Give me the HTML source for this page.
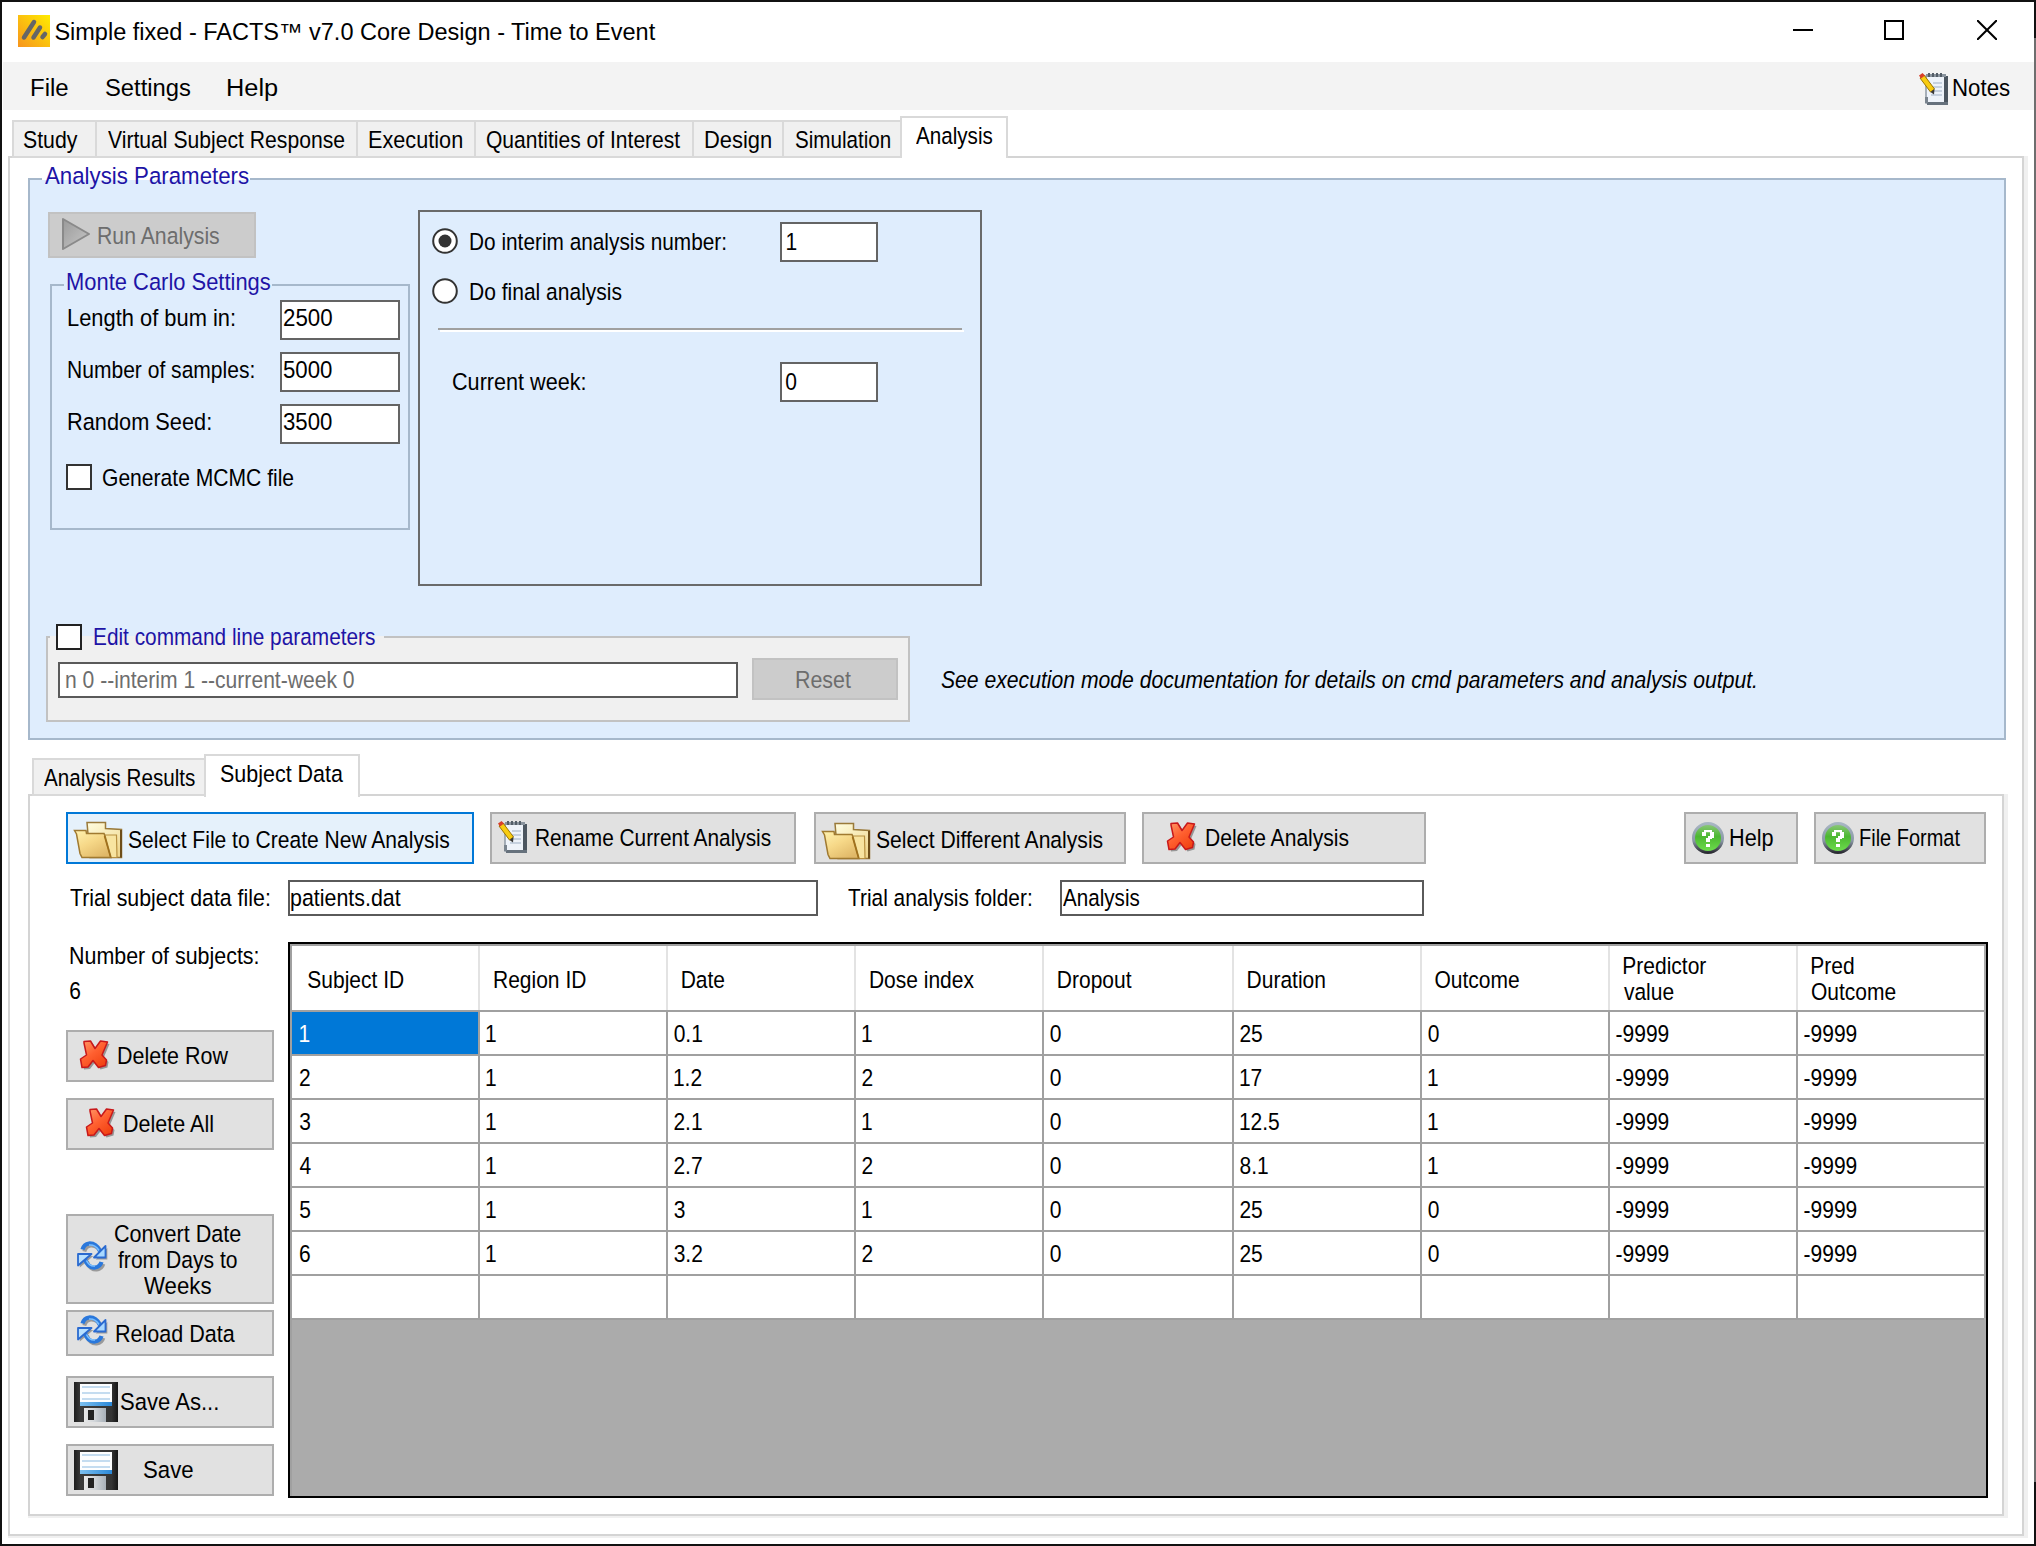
<!DOCTYPE html>
<html><head><meta charset="utf-8"><style>
html,body{margin:0;padding:0;}
body{width:2036px;height:1546px;overflow:hidden;position:relative;background:#fff;font-family:"Liberation Sans",sans-serif;}
.a{position:absolute;}
.t{position:absolute;white-space:pre;font-family:"Liberation Sans",sans-serif;}
</style></head><body>
<div class="a" style="left:0px;top:0px;width:2036px;height:1546px;background:#ffffff;"></div>
<div class="a" style="left:3px;top:62px;width:2031px;height:48px;background:#f3f3f3;"></div>
<div class="a" style="left:0px;top:0px;width:2036px;height:2px;background:#111;"></div>
<div class="a" style="left:0px;top:0px;width:2px;height:1546px;background:#111;"></div>
<div class="a" style="left:0px;top:1544px;width:2036px;height:2px;background:#111;"></div>
<div class="a" style="left:2034px;top:0px;width:2px;height:38px;background:#111;"></div>
<div class="a" style="left:2034px;top:38px;width:2px;height:1444px;background:#6e6e6e;"></div>
<div class="a" style="left:2034px;top:1482px;width:2px;height:64px;background:#111;"></div>
<svg class="a" style="left:18px;top:15px" width="32" height="32" viewBox="0 0 32 32">
<defs><linearGradient id="ag" x1="1" y1="0" x2="0" y2="1"><stop offset="0" stop-color="#ffec00"/><stop offset="1" stop-color="#f7941d"/></linearGradient></defs>
<rect width="32" height="32" fill="url(#ag)"/>
<g stroke="#666" stroke-width="4.5" stroke-linecap="round"><line x1="6" y1="22.5" x2="16" y2="7"/><line x1="15.5" y1="22.5" x2="22" y2="12.5"/><line x1="24.5" y1="22" x2="27" y2="19"/></g></svg>
<div class="t" style="left:54.4px;top:21px;font-size:23.5px;line-height:23.5px;color:#000;">Simple fixed - FACTS™ v7.0 Core Design - Time to Event</div>
<div class="a" style="left:1793px;top:29px;width:20px;height:2px;background:#000;"></div>
<div class="a" style="left:1884px;top:20px;width:20px;height:20px;box-sizing:border-box;border:2px solid #000;"></div>
<svg class="a" style="left:1977px;top:20px" width="20" height="20" viewBox="0 0 20 20"><g stroke="#000" stroke-width="2"><line x1="0" y1="0" x2="20" y2="20"/><line x1="20" y1="0" x2="0" y2="20"/></g></svg>
<div class="t" style="left:30.4px;top:77px;font-size:23px;line-height:23px;color:#000;transform:scale(1.0423,1.0800);transform-origin:0 19px;">File</div>
<div class="t" style="left:104.9px;top:77px;font-size:23px;line-height:23px;color:#000;transform:scale(1.0341,1.0800);transform-origin:0 19px;">Settings</div>
<div class="t" style="left:225.9px;top:77px;font-size:23px;line-height:23px;color:#000;transform:scale(1.1023,1.0800);transform-origin:0 19px;">Help</div>
<div class="t" style="left:1952.2px;top:78px;font-size:21px;line-height:21px;color:#000;transform:scale(1.0596,1.1700);transform-origin:0 18px;">Notes</div>
<div class="a" style="left:8px;top:156px;width:2016px;height:1380px;background:#ffffff;box-sizing:border-box;border:2px solid #d4d4d4;"></div>
<div class="a" style="left:2024px;top:156px;width:4px;height:1382px;background:#f0f0f0;"></div>
<div class="a" style="left:8px;top:1536px;width:2020px;height:2px;background:#f0f0f0;"></div>
<div class="a" style="left:12px;top:120px;width:85px;height:38px;background:#f0f0f0;box-sizing:border-box;border:2px solid #d9d9d9;"></div>
<div class="a" style="left:95px;top:120px;width:263px;height:38px;background:#f0f0f0;box-sizing:border-box;border:2px solid #d9d9d9;"></div>
<div class="a" style="left:356px;top:120px;width:120px;height:38px;background:#f0f0f0;box-sizing:border-box;border:2px solid #d9d9d9;"></div>
<div class="a" style="left:474px;top:120px;width:220px;height:38px;background:#f0f0f0;box-sizing:border-box;border:2px solid #d9d9d9;"></div>
<div class="a" style="left:692px;top:120px;width:92px;height:38px;background:#f0f0f0;box-sizing:border-box;border:2px solid #d9d9d9;"></div>
<div class="a" style="left:782px;top:120px;width:120px;height:38px;background:#f0f0f0;box-sizing:border-box;border:2px solid #d9d9d9;"></div>
<div class="t" style="left:23.2px;top:130px;font-size:21px;line-height:21px;color:#000;transform:scale(1.0132,1.1700);transform-origin:0 18px;">Study</div>
<div class="t" style="left:107.9px;top:130px;font-size:21px;line-height:21px;color:#000;transform:scale(1.0068,1.1700);transform-origin:0 18px;">Virtual Subject Response</div>
<div class="t" style="left:368.2px;top:130px;font-size:21px;line-height:21px;color:#000;transform:scale(1.0321,1.1700);transform-origin:0 18px;">Execution</div>
<div class="t" style="left:486.0px;top:130px;font-size:21px;line-height:21px;color:#000;transform:scale(1.0020,1.1700);transform-origin:0 18px;">Quantities of Interest</div>
<div class="t" style="left:704.2px;top:130px;font-size:21px;line-height:21px;color:#000;transform:scale(1.0436,1.1700);transform-origin:0 18px;">Design</div>
<div class="t" style="left:795.1px;top:130px;font-size:21px;line-height:21px;color:#000;transform:scale(0.9819,1.1700);transform-origin:0 18px;">Simulation</div>
<div class="a" style="left:900px;top:116px;width:108px;height:42px;background:#ffffff;box-sizing:border-box;border:2px solid #d9d9d9;border-bottom:none;"></div>
<div class="t" style="left:915.9px;top:126px;font-size:21px;line-height:21px;color:#000;transform:scale(0.9819,1.1700);transform-origin:0 18px;">Analysis</div>
<div class="a" style="left:28px;top:178px;width:1978px;height:562px;background:#dfedfd;box-sizing:border-box;border:2px solid #a6b8cb;"></div>
<div class="a" style="left:42px;top:176px;width:208px;height:5px;background:#ffffff;"></div>
<div class="a" style="left:42px;top:180px;width:208px;height:2px;background:#dfedfd;"></div>
<div class="t" style="left:44.7px;top:166px;font-size:21px;line-height:21px;color:#1e14a6;transform:scale(1.0601,1.1700);transform-origin:0 18px;">Analysis Parameters</div>
<div class="a" style="left:48px;top:212px;width:208px;height:46px;background:#cccccc;box-sizing:border-box;border:2px solid #c2c2c2;"></div>
<svg class="a" style="left:61px;top:217px" width="30" height="34" viewBox="0 0 30 34">
<defs><linearGradient id="pg" x1="0" y1="0" x2="1" y2="1"><stop offset="0" stop-color="#9a9a9a"/><stop offset="1" stop-color="#c8c8c8"/></linearGradient></defs>
<polygon points="2,2 28,17 2,32" fill="url(#pg)" stroke="#8a8a8a" stroke-width="2" stroke-linejoin="round"/></svg>
<div class="t" style="left:96.7px;top:226px;font-size:21px;line-height:21px;color:#6d6d6d;transform:scale(1.0108,1.1700);transform-origin:0 18px;">Run Analysis</div>
<div class="a" style="left:50px;top:284px;width:360px;height:246px;box-sizing:border-box;border:2px solid #a6b8cb;"></div>
<div class="a" style="left:64px;top:282px;width:208px;height:6px;background:#dfedfd;"></div>
<div class="t" style="left:65.9px;top:272px;font-size:21px;line-height:21px;color:#1e14a6;transform:scale(1.0443,1.1700);transform-origin:0 18px;">Monte Carlo Settings</div>
<div class="t" style="left:66.5px;top:308px;font-size:21px;line-height:21px;color:#000;transform:scale(1.0420,1.1700);transform-origin:0 18px;">Length of bum in:</div>
<div class="t" style="left:66.6px;top:360px;font-size:21px;line-height:21px;color:#000;transform:scale(1.0023,1.1700);transform-origin:0 18px;">Number of samples:</div>
<div class="t" style="left:66.5px;top:412px;font-size:21px;line-height:21px;color:#000;transform:scale(1.0363,1.1700);transform-origin:0 18px;">Random Seed:</div>
<div class="a" style="left:280px;top:300px;width:120px;height:40px;background:#fff;box-sizing:border-box;border:2px solid #646464;"></div>
<div class="t" style="left:282.9px;top:308px;font-size:21px;line-height:21px;color:#000;transform:scale(1.0637,1.1700);transform-origin:0 18px;">2500</div>
<div class="a" style="left:280px;top:352px;width:120px;height:40px;background:#fff;box-sizing:border-box;border:2px solid #646464;"></div>
<div class="t" style="left:283.1px;top:360px;font-size:21px;line-height:21px;color:#000;transform:scale(1.0587,1.1700);transform-origin:0 18px;">5000</div>
<div class="a" style="left:280px;top:404px;width:120px;height:40px;background:#fff;box-sizing:border-box;border:2px solid #646464;"></div>
<div class="t" style="left:283.2px;top:412px;font-size:21px;line-height:21px;color:#000;transform:scale(1.0577,1.1700);transform-origin:0 18px;">3500</div>
<div class="a" style="left:66px;top:464px;width:26px;height:26px;background:#fff;box-sizing:border-box;border:2px solid #333333;"></div>
<div class="t" style="left:101.6px;top:468px;font-size:21px;line-height:21px;color:#000;transform:scale(1.0037,1.1700);transform-origin:0 18px;">Generate MCMC file</div>
<div class="a" style="left:418px;top:210px;width:564px;height:376px;box-sizing:border-box;border:2px solid #6a6a6a;"></div>
<svg class="a" style="left:431px;top:227px" width="28" height="28" viewBox="0 0 28 28"><circle cx="14" cy="14" r="11.8" fill="#fff" stroke="#333" stroke-width="2"/><circle cx="14" cy="14" r="6.5" fill="#333"/></svg>
<svg class="a" style="left:431px;top:277px" width="28" height="28" viewBox="0 0 28 28"><circle cx="14" cy="14" r="11.8" fill="#fff" stroke="#333" stroke-width="2"/></svg>
<div class="t" style="left:468.6px;top:232px;font-size:21px;line-height:21px;color:#000;transform:scale(0.9913,1.1700);transform-origin:0 18px;">Do interim analysis number:</div>
<div class="t" style="left:468.6px;top:282px;font-size:21px;line-height:21px;color:#000;transform:scale(1.0005,1.1700);transform-origin:0 18px;">Do final analysis</div>
<div class="a" style="left:780px;top:222px;width:98px;height:40px;background:#fff;box-sizing:border-box;border:2px solid #646464;"></div>
<div class="t" style="left:785.4px;top:232px;font-size:21px;line-height:21px;color:#000;transform:scale(1.0000,1.1700);transform-origin:0 18px;">1</div>
<div class="a" style="left:438px;top:328px;width:524px;height:2px;background:#a0a0a0;"></div>
<div class="a" style="left:440px;top:330px;width:524px;height:2px;background:#ffffff;"></div>
<div class="t" style="left:452.4px;top:372px;font-size:21px;line-height:21px;color:#000;transform:scale(1.0295,1.1700);transform-origin:0 18px;">Current week:</div>
<div class="a" style="left:780px;top:362px;width:98px;height:40px;background:#fff;box-sizing:border-box;border:2px solid #646464;"></div>
<div class="t" style="left:785.2px;top:372px;font-size:21px;line-height:21px;color:#000;transform:scale(1.0000,1.1700);transform-origin:0 18px;">0</div>
<div class="a" style="left:46px;top:636px;width:864px;height:86px;background:#f0f0f0;box-sizing:border-box;border:2px solid #c2c2c2;"></div>
<div class="a" style="left:50px;top:622px;width:334px;height:14px;background:#dfedfd;"></div>
<div class="a" style="left:50px;top:636px;width:334px;height:2px;background:#f0f0f0;"></div>
<div class="a" style="left:56px;top:624px;width:26px;height:26px;background:#fff;box-sizing:border-box;border:2px solid #222;"></div>
<div class="t" style="left:93.3px;top:627px;font-size:21px;line-height:21px;color:#1e14a6;transform:scale(0.9918,1.1700);transform-origin:0 18px;">Edit command line parameters</div>
<div class="a" style="left:58px;top:662px;width:680px;height:36px;background:#fff;box-sizing:border-box;border:2px solid #5a5a5a;"></div>
<div class="t" style="left:64.7px;top:670px;font-size:21px;line-height:21px;color:#6d6d6d;transform:scale(1.0047,1.1700);transform-origin:0 18px;">n 0 --interim 1 --current-week 0</div>
<div class="a" style="left:752px;top:658px;width:146px;height:42px;background:#cccccc;box-sizing:border-box;border:2px solid #c2c2c2;"></div>
<div class="t" style="left:794.7px;top:670px;font-size:21px;line-height:21px;color:#6d6d6d;transform:scale(1.0192,1.1700);transform-origin:0 18px;">Reset</div>
<div class="t" style="left:941.2px;top:670px;font-size:21px;line-height:21px;color:#000;font-style:italic;transform:scale(1.0069,1.1700);transform-origin:0 18px;">See execution mode documentation for details on cmd parameters and analysis output.</div>
<div class="a" style="left:28px;top:794px;width:1976px;height:722px;background:#ffffff;box-sizing:border-box;border:2px solid #d4d4d4;"></div>
<div class="a" style="left:2004px;top:794px;width:4px;height:724px;background:#f0f0f0;"></div>
<div class="a" style="left:28px;top:1516px;width:1980px;height:2px;background:#f0f0f0;"></div>
<div class="a" style="left:32px;top:758px;width:174px;height:38px;background:#f0f0f0;box-sizing:border-box;border:2px solid #d9d9d9;"></div>
<div class="t" style="left:44.4px;top:768px;font-size:21px;line-height:21px;color:#000;transform:scale(0.9827,1.1700);transform-origin:0 18px;">Analysis Results</div>
<div class="a" style="left:204px;top:754px;width:156px;height:43px;background:#ffffff;box-sizing:border-box;border:2px solid #d9d9d9;border-bottom:none;"></div>
<div class="t" style="left:219.7px;top:764px;font-size:21px;line-height:21px;color:#000;transform:scale(1.0228,1.1700);transform-origin:0 18px;">Subject Data</div>
<svg class="a" style="left:1917px;top:73px" width="34" height="34" viewBox="0 0 34 34">
<rect x="9" y="3" width="19" height="27" fill="#eef3fa" stroke="#8f99a4" stroke-width="1.5"/>
<rect x="27" y="3" width="4" height="29" fill="#4c5660"/>
<rect x="10" y="29" width="21" height="3" fill="#66717c"/>
<rect x="8" y="24" width="3" height="6" fill="#7a848e"/>
<g stroke="#b8c6d6" stroke-width="1.5"><line x1="16" y1="10" x2="25" y2="10"/><line x1="16" y1="14" x2="25" y2="14"/><line x1="16" y1="18" x2="25" y2="18"/><line x1="14" y1="22" x2="25" y2="22"/></g>
<rect x="9" y="1" width="20" height="3" fill="#8a949e"/>
<g fill="#545e68"><rect x="11" y="0" width="2" height="4"/><rect x="15" y="0" width="2" height="4"/><rect x="19" y="0" width="2" height="4"/><rect x="23" y="0" width="2" height="4"/></g>
<polygon points="3,5 7,2 17.5,16 13.5,19" fill="#f8cc10" stroke="#9a7400" stroke-width="1"/>
<polygon points="2,2.5 5.5,0 8,2.5 4,5.5" fill="#d8402a"/>
<polygon points="13.5,19 17.5,16 17,21.5" fill="#3a3a3a"/>
</svg>
<div class="a" style="left:66px;top:812px;width:408px;height:52px;background:#e5f1fb;box-sizing:border-box;border:2px solid #0078d7;"></div>
<svg class="a" style="left:70px;top:816px" width="56" height="46" viewBox="0 0 56 46">
<defs><linearGradient id="fg2" x1="0" y1="0" x2="0.6" y2="1"><stop offset="0" stop-color="#fffde0"/><stop offset="1" stop-color="#f0d890"/></linearGradient>
<linearGradient id="fb2" x1="0" y1="0" x2="0.7" y2="1"><stop offset="0" stop-color="#fff2b0"/><stop offset="0.5" stop-color="#f6d888"/><stop offset="1" stop-color="#e0b868"/></linearGradient></defs>
<path d="M17,6.5 L35.5,6.5 L35.5,12.5 L51.5,13.5 L51.5,41.5 L20,41.5 Z" fill="url(#fg2)" stroke="#9a7a3a" stroke-width="1.5"/>
<line x1="51" y1="14" x2="51" y2="41.5" stroke="#6e4e18" stroke-width="2"/>
<path d="M33.5,19 L46.5,19 L47,41.5 L40,41.5 Z" fill="#f8e4a0" stroke="#b89040" stroke-width="1.2"/>
<path d="M4.5,14.5 L16,14.5 L16.5,17.5 L34,17.5 L35,20 L41,41.5 L12,41.5 L10,37.5 L6.5,18 Z" fill="url(#fb2)" stroke="#a07a30" stroke-width="1.5"/>
<line x1="34.5" y1="20" x2="40.5" y2="41" stroke="#a0701c" stroke-width="1.5"/>
</svg>
<div class="t" style="left:127.7px;top:830px;font-size:21px;line-height:21px;color:#000;transform:scale(1.0023,1.1700);transform-origin:0 18px;">Select File to Create New Analysis</div>
<div class="a" style="left:490px;top:812px;width:306px;height:52px;background:#e1e1e1;box-sizing:border-box;border:2px solid #adadad;"></div>
<svg class="a" style="left:496px;top:821px" width="34" height="34" viewBox="0 0 34 34">
<rect x="9" y="3" width="19" height="27" fill="#eef3fa" stroke="#8f99a4" stroke-width="1.5"/>
<rect x="27" y="3" width="4" height="29" fill="#4c5660"/>
<rect x="10" y="29" width="21" height="3" fill="#66717c"/>
<rect x="8" y="24" width="3" height="6" fill="#7a848e"/>
<g stroke="#b8c6d6" stroke-width="1.5"><line x1="16" y1="10" x2="25" y2="10"/><line x1="16" y1="14" x2="25" y2="14"/><line x1="16" y1="18" x2="25" y2="18"/><line x1="14" y1="22" x2="25" y2="22"/></g>
<rect x="9" y="1" width="20" height="3" fill="#8a949e"/>
<g fill="#545e68"><rect x="11" y="0" width="2" height="4"/><rect x="15" y="0" width="2" height="4"/><rect x="19" y="0" width="2" height="4"/><rect x="23" y="0" width="2" height="4"/></g>
<polygon points="3,5 7,2 17.5,16 13.5,19" fill="#f8cc10" stroke="#9a7400" stroke-width="1"/>
<polygon points="2,2.5 5.5,0 8,2.5 4,5.5" fill="#d8402a"/>
<polygon points="13.5,19 17.5,16 17,21.5" fill="#3a3a3a"/>
</svg>
<div class="t" style="left:535.1px;top:828px;font-size:21px;line-height:21px;color:#000;transform:scale(0.9918,1.1700);transform-origin:0 18px;">Rename Current Analysis</div>
<div class="a" style="left:814px;top:812px;width:312px;height:52px;background:#e1e1e1;box-sizing:border-box;border:2px solid #adadad;"></div>
<svg class="a" style="left:818px;top:817px" width="56" height="46" viewBox="0 0 56 46">
<defs><linearGradient id="fg4" x1="0" y1="0" x2="0.6" y2="1"><stop offset="0" stop-color="#fffde0"/><stop offset="1" stop-color="#f0d890"/></linearGradient>
<linearGradient id="fb4" x1="0" y1="0" x2="0.7" y2="1"><stop offset="0" stop-color="#fff2b0"/><stop offset="0.5" stop-color="#f6d888"/><stop offset="1" stop-color="#e0b868"/></linearGradient></defs>
<path d="M17,6.5 L35.5,6.5 L35.5,12.5 L51.5,13.5 L51.5,41.5 L20,41.5 Z" fill="url(#fg4)" stroke="#9a7a3a" stroke-width="1.5"/>
<line x1="51" y1="14" x2="51" y2="41.5" stroke="#6e4e18" stroke-width="2"/>
<path d="M33.5,19 L46.5,19 L47,41.5 L40,41.5 Z" fill="#f8e4a0" stroke="#b89040" stroke-width="1.2"/>
<path d="M4.5,14.5 L16,14.5 L16.5,17.5 L34,17.5 L35,20 L41,41.5 L12,41.5 L10,37.5 L6.5,18 Z" fill="url(#fb4)" stroke="#a07a30" stroke-width="1.5"/>
<line x1="34.5" y1="20" x2="40.5" y2="41" stroke="#a0701c" stroke-width="1.5"/>
</svg>
<div class="t" style="left:876.0px;top:830px;font-size:21px;line-height:21px;color:#000;transform:scale(1.0047,1.1700);transform-origin:0 18px;">Select Different Analysis</div>
<div class="a" style="left:1142px;top:812px;width:284px;height:52px;background:#e1e1e1;box-sizing:border-box;border:2px solid #adadad;"></div>
<svg class="a" style="left:1163px;top:818px" width="38" height="38" viewBox="0 0 38 38">
<defs><linearGradient id="xg5" x1="0" y1="0" x2="0.8" y2="1"><stop offset="0" stop-color="#ff9a6a"/><stop offset="0.5" stop-color="#ff6030"/><stop offset="1" stop-color="#f04010"/></linearGradient></defs>
<polygon points="8,5.5 14.5,5 19,12.5 24.5,5 31.5,6 26,19 30.5,24 29.5,29.5 22.5,31.5 17,24.5 12,31 6,31.5 4.5,23 10.5,19 8,7" fill="#5a5a5a" opacity="0.55" transform="translate(2,2)"/>
<polygon points="8,5.5 14.5,5 19,12.5 24.5,5 31.5,6 26,19 30.5,24 29.5,29.5 22.5,31.5 17,24.5 12,31 6,31.5 4.5,23 10.5,19 8,7" fill="url(#xg5)" stroke="#c8181a" stroke-width="1.5" stroke-linejoin="round"/>
</svg>
<div class="t" style="left:1205.3px;top:828px;font-size:21px;line-height:21px;color:#000;transform:scale(1.0036,1.1700);transform-origin:0 18px;">Delete Analysis</div>
<div class="a" style="left:1684px;top:812px;width:114px;height:52px;background:#e1e1e1;box-sizing:border-box;border:2px solid #adadad;"></div>
<svg class="a" style="left:1692px;top:822px" width="32" height="32" viewBox="0 0 32 32">
<defs><linearGradient id="hr6" x1="0" y1="0" x2="0" y2="1"><stop offset="0" stop-color="#a8b6c4"/><stop offset="0.6" stop-color="#8a98a6"/><stop offset="1" stop-color="#2c2c34"/></linearGradient>
<linearGradient id="hg6" x1="0" y1="0" x2="0" y2="1"><stop offset="0" stop-color="#90c880"/><stop offset="0.45" stop-color="#4cb830"/><stop offset="1" stop-color="#70e050"/></linearGradient></defs>
<circle cx="16" cy="16" r="14.5" fill="url(#hg6)" stroke="url(#hr6)" stroke-width="3"/>
<g fill="#fff"><rect x="12" y="8" width="8" height="2.2"/><rect x="10" y="10" width="4" height="4"/><rect x="18" y="10" width="4" height="6"/><rect x="16" y="14" width="4" height="3"/><rect x="14" y="16" width="4" height="4"/><rect x="14" y="22" width="4" height="3"/></g>
</svg>
<div class="t" style="left:1728.6px;top:828px;font-size:21px;line-height:21px;color:#000;transform:scale(1.0324,1.1700);transform-origin:0 18px;">Help</div>
<div class="a" style="left:1814px;top:812px;width:172px;height:52px;background:#e1e1e1;box-sizing:border-box;border:2px solid #adadad;"></div>
<svg class="a" style="left:1822px;top:822px" width="32" height="32" viewBox="0 0 32 32">
<defs><linearGradient id="hr7" x1="0" y1="0" x2="0" y2="1"><stop offset="0" stop-color="#a8b6c4"/><stop offset="0.6" stop-color="#8a98a6"/><stop offset="1" stop-color="#2c2c34"/></linearGradient>
<linearGradient id="hg7" x1="0" y1="0" x2="0" y2="1"><stop offset="0" stop-color="#90c880"/><stop offset="0.45" stop-color="#4cb830"/><stop offset="1" stop-color="#70e050"/></linearGradient></defs>
<circle cx="16" cy="16" r="14.5" fill="url(#hg7)" stroke="url(#hr7)" stroke-width="3"/>
<g fill="#fff"><rect x="12" y="8" width="8" height="2.2"/><rect x="10" y="10" width="4" height="4"/><rect x="18" y="10" width="4" height="6"/><rect x="16" y="14" width="4" height="3"/><rect x="14" y="16" width="4" height="4"/><rect x="14" y="22" width="4" height="3"/></g>
</svg>
<div class="t" style="left:1859.2px;top:828px;font-size:21px;line-height:21px;color:#000;transform:scale(0.9510,1.1700);transform-origin:0 18px;">File Format</div>
<div class="t" style="left:70.3px;top:888px;font-size:21px;line-height:21px;color:#000;transform:scale(1.0161,1.1700);transform-origin:0 18px;">Trial subject data file:</div>
<div class="a" style="left:288px;top:880px;width:530px;height:36px;background:#fff;box-sizing:border-box;border:2px solid #5a5a5a;"></div>
<div class="t" style="left:289.9px;top:888px;font-size:21px;line-height:21px;color:#000;transform:scale(1.0189,1.1700);transform-origin:0 18px;">patients.dat</div>
<div class="t" style="left:848.2px;top:888px;font-size:21px;line-height:21px;color:#000;transform:scale(0.9931,1.1700);transform-origin:0 18px;">Trial analysis folder:</div>
<div class="a" style="left:1060px;top:880px;width:364px;height:36px;background:#fff;box-sizing:border-box;border:2px solid #5a5a5a;"></div>
<div class="t" style="left:1063.0px;top:888px;font-size:21px;line-height:21px;color:#000;transform:scale(0.9819,1.1700);transform-origin:0 18px;">Analysis</div>
<div class="t" style="left:68.6px;top:946px;font-size:21px;line-height:21px;color:#000;transform:scale(1.0202,1.1700);transform-origin:0 18px;">Number of subjects:</div>
<div class="t" style="left:69.3px;top:981px;font-size:21px;line-height:21px;color:#000;transform:scale(1.0000,1.1700);transform-origin:0 18px;">6</div>
<div class="a" style="left:66px;top:1030px;width:208px;height:52px;background:#e1e1e1;box-sizing:border-box;border:2px solid #adadad;"></div>
<svg class="a" style="left:76px;top:1036px" width="38" height="38" viewBox="0 0 38 38">
<defs><linearGradient id="xg8" x1="0" y1="0" x2="0.8" y2="1"><stop offset="0" stop-color="#ff9a6a"/><stop offset="0.5" stop-color="#ff6030"/><stop offset="1" stop-color="#f04010"/></linearGradient></defs>
<polygon points="8,5.5 14.5,5 19,12.5 24.5,5 31.5,6 26,19 30.5,24 29.5,29.5 22.5,31.5 17,24.5 12,31 6,31.5 4.5,23 10.5,19 8,7" fill="#5a5a5a" opacity="0.55" transform="translate(2,2)"/>
<polygon points="8,5.5 14.5,5 19,12.5 24.5,5 31.5,6 26,19 30.5,24 29.5,29.5 22.5,31.5 17,24.5 12,31 6,31.5 4.5,23 10.5,19 8,7" fill="url(#xg8)" stroke="#c8181a" stroke-width="1.5" stroke-linejoin="round"/>
</svg>
<div class="t" style="left:117.0px;top:1046px;font-size:21px;line-height:21px;color:#000;transform:scale(1.0217,1.1700);transform-origin:0 18px;">Delete Row</div>
<div class="a" style="left:66px;top:1098px;width:208px;height:52px;background:#e1e1e1;box-sizing:border-box;border:2px solid #adadad;"></div>
<svg class="a" style="left:82px;top:1104px" width="38" height="38" viewBox="0 0 38 38">
<defs><linearGradient id="xg9" x1="0" y1="0" x2="0.8" y2="1"><stop offset="0" stop-color="#ff9a6a"/><stop offset="0.5" stop-color="#ff6030"/><stop offset="1" stop-color="#f04010"/></linearGradient></defs>
<polygon points="8,5.5 14.5,5 19,12.5 24.5,5 31.5,6 26,19 30.5,24 29.5,29.5 22.5,31.5 17,24.5 12,31 6,31.5 4.5,23 10.5,19 8,7" fill="#5a5a5a" opacity="0.55" transform="translate(2,2)"/>
<polygon points="8,5.5 14.5,5 19,12.5 24.5,5 31.5,6 26,19 30.5,24 29.5,29.5 22.5,31.5 17,24.5 12,31 6,31.5 4.5,23 10.5,19 8,7" fill="url(#xg9)" stroke="#c8181a" stroke-width="1.5" stroke-linejoin="round"/>
</svg>
<div class="t" style="left:122.9px;top:1114px;font-size:21px;line-height:21px;color:#000;transform:scale(1.0258,1.1700);transform-origin:0 18px;">Delete All</div>
<div class="a" style="left:66px;top:1214px;width:208px;height:90px;background:#e1e1e1;box-sizing:border-box;border:2px solid #adadad;"></div>
<svg class="a" style="left:74px;top:1236px" width="38" height="40" viewBox="0 0 38 40">
<g transform="translate(1.8,2)" opacity="0.5" fill="#555" stroke="#555">
<path d="M26,15 Q22,7 15,7.5 Q10,8 8.5,13.5" fill="none" stroke-width="4"/>
<polygon points="20,21.5 31.5,10 31.5,21.5" stroke="none"/>
<path d="M11,23.5 Q14,32 21,31.5 Q26,31 27.5,26" fill="none" stroke-width="4"/>
<polygon points="4,18 17.5,18 4,29.5" stroke="none"/></g>
<path d="M26,15 Q22,7 15,7.5 Q10,8 8.5,13.5" fill="none" stroke="#2a78dc" stroke-width="4.2"/>
<path d="M25,14.5 Q21.5,8.5 15,9 " fill="none" stroke="#7cc0ff" stroke-width="1.5"/>
<polygon points="20,21.5 31.5,10 31.5,21.5" fill="#a8d8ff" stroke="#2a6ad0" stroke-width="1.8" stroke-linejoin="round"/>
<path d="M11,23.5 Q14,32 21,31.5 Q26,31 27.5,26" fill="none" stroke="#2a78dc" stroke-width="4.2"/>
<path d="M12.5,24.5 Q15,30.5 21,30 " fill="none" stroke="#7cc0ff" stroke-width="1.5"/>
<polygon points="4,18 17.5,18 4,29.5" fill="#b8e0ff" stroke="#2a6ad0" stroke-width="1.8" stroke-linejoin="round"/>
</svg>
<div class="t" style="left:114.2px;top:1224px;font-size:21px;line-height:21px;color:#000;transform:scale(1.0285,1.1700);transform-origin:0 18px;">Convert Date</div>
<div class="t" style="left:117.5px;top:1250px;font-size:21px;line-height:21px;color:#000;transform:scale(1.0047,1.1700);transform-origin:0 18px;">from Days to</div>
<div class="t" style="left:143.7px;top:1276px;font-size:21px;line-height:21px;color:#000;transform:scale(1.0580,1.1700);transform-origin:0 18px;">Weeks</div>
<div class="a" style="left:66px;top:1310px;width:208px;height:46px;background:#e1e1e1;box-sizing:border-box;border:2px solid #adadad;"></div>
<svg class="a" style="left:74px;top:1310px" width="38" height="40" viewBox="0 0 38 40">
<g transform="translate(1.8,2)" opacity="0.5" fill="#555" stroke="#555">
<path d="M26,15 Q22,7 15,7.5 Q10,8 8.5,13.5" fill="none" stroke-width="4"/>
<polygon points="20,21.5 31.5,10 31.5,21.5" stroke="none"/>
<path d="M11,23.5 Q14,32 21,31.5 Q26,31 27.5,26" fill="none" stroke-width="4"/>
<polygon points="4,18 17.5,18 4,29.5" stroke="none"/></g>
<path d="M26,15 Q22,7 15,7.5 Q10,8 8.5,13.5" fill="none" stroke="#2a78dc" stroke-width="4.2"/>
<path d="M25,14.5 Q21.5,8.5 15,9 " fill="none" stroke="#7cc0ff" stroke-width="1.5"/>
<polygon points="20,21.5 31.5,10 31.5,21.5" fill="#a8d8ff" stroke="#2a6ad0" stroke-width="1.8" stroke-linejoin="round"/>
<path d="M11,23.5 Q14,32 21,31.5 Q26,31 27.5,26" fill="none" stroke="#2a78dc" stroke-width="4.2"/>
<path d="M12.5,24.5 Q15,30.5 21,30 " fill="none" stroke="#7cc0ff" stroke-width="1.5"/>
<polygon points="4,18 17.5,18 4,29.5" fill="#b8e0ff" stroke="#2a6ad0" stroke-width="1.8" stroke-linejoin="round"/>
</svg>
<div class="t" style="left:114.5px;top:1324px;font-size:21px;line-height:21px;color:#000;transform:scale(1.0259,1.1700);transform-origin:0 18px;">Reload Data</div>
<div class="a" style="left:66px;top:1376px;width:208px;height:52px;background:#e1e1e1;box-sizing:border-box;border:2px solid #adadad;"></div>
<svg class="a" style="left:74px;top:1382px" width="44" height="40" viewBox="0 0 44 40">
<defs><linearGradient id="dg12" x1="0" y1="0" x2="1" y2="0"><stop offset="0" stop-color="#1e1e1e"/><stop offset="0.15" stop-color="#3a3a3a"/><stop offset="0.85" stop-color="#343434"/><stop offset="1" stop-color="#161616"/></linearGradient>
<linearGradient id="sb12" x1="0" y1="0" x2="1" y2="0"><stop offset="0" stop-color="#7cc0f0"/><stop offset="1" stop-color="#2a88d8"/></linearGradient>
<linearGradient id="sh12" x1="0" y1="0" x2="1" y2="0"><stop offset="0" stop-color="#e8e8e8"/><stop offset="0.5" stop-color="#d0d4d8"/><stop offset="1" stop-color="#a8b0b8"/></linearGradient></defs>
<rect x="0" y="0" width="44" height="40" fill="url(#dg12)"/>
<rect x="6" y="2" width="32" height="19" fill="#fdfeff"/>
<rect x="6" y="20" width="32" height="4" fill="url(#sb12)"/>
<g fill="#c4dcf0"><rect x="8" y="4" width="28" height="2"/><rect x="8" y="10" width="28" height="2"/><rect x="8" y="16" width="28" height="2"/></g>
<rect x="10" y="26" width="22" height="14" fill="url(#sh12)"/>
<rect x="14" y="28" width="6" height="10" fill="#222"/>
</svg>
<div class="t" style="left:119.5px;top:1392px;font-size:21px;line-height:21px;color:#000;transform:scale(1.0504,1.1700);transform-origin:0 18px;">Save As...</div>
<div class="a" style="left:66px;top:1444px;width:208px;height:52px;background:#e1e1e1;box-sizing:border-box;border:2px solid #adadad;"></div>
<svg class="a" style="left:74px;top:1450px" width="44" height="40" viewBox="0 0 44 40">
<defs><linearGradient id="dg13" x1="0" y1="0" x2="1" y2="0"><stop offset="0" stop-color="#1e1e1e"/><stop offset="0.15" stop-color="#3a3a3a"/><stop offset="0.85" stop-color="#343434"/><stop offset="1" stop-color="#161616"/></linearGradient>
<linearGradient id="sb13" x1="0" y1="0" x2="1" y2="0"><stop offset="0" stop-color="#7cc0f0"/><stop offset="1" stop-color="#2a88d8"/></linearGradient>
<linearGradient id="sh13" x1="0" y1="0" x2="1" y2="0"><stop offset="0" stop-color="#e8e8e8"/><stop offset="0.5" stop-color="#d0d4d8"/><stop offset="1" stop-color="#a8b0b8"/></linearGradient></defs>
<rect x="0" y="0" width="44" height="40" fill="url(#dg13)"/>
<rect x="6" y="2" width="32" height="19" fill="#fdfeff"/>
<rect x="6" y="20" width="32" height="4" fill="url(#sb13)"/>
<g fill="#c4dcf0"><rect x="8" y="4" width="28" height="2"/><rect x="8" y="10" width="28" height="2"/><rect x="8" y="16" width="28" height="2"/></g>
<rect x="10" y="26" width="22" height="14" fill="url(#sh13)"/>
<rect x="14" y="28" width="6" height="10" fill="#222"/>
</svg>
<div class="t" style="left:143.4px;top:1460px;font-size:21px;line-height:21px;color:#000;transform:scale(1.0570,1.1700);transform-origin:0 18px;">Save</div>
<div class="a" style="left:288px;top:942px;width:1700px;height:556px;background:#ababab;box-sizing:border-box;border:2px solid #000000;"></div>
<div class="a" style="left:290px;top:944px;width:1696px;height:2px;background:#a0a0a0;"></div>
<div class="a" style="left:290px;top:944px;width:2px;height:552px;background:#a0a0a0;"></div>
<div class="a" style="left:292px;top:946px;width:1692px;height:64px;background:#ffffff;"></div>
<div class="a" style="left:478px;top:946px;width:2px;height:64px;background:#e3e3e3;"></div>
<div class="a" style="left:666px;top:946px;width:2px;height:64px;background:#e3e3e3;"></div>
<div class="a" style="left:854px;top:946px;width:2px;height:64px;background:#e3e3e3;"></div>
<div class="a" style="left:1042px;top:946px;width:2px;height:64px;background:#e3e3e3;"></div>
<div class="a" style="left:1232px;top:946px;width:2px;height:64px;background:#e3e3e3;"></div>
<div class="a" style="left:1420px;top:946px;width:2px;height:64px;background:#e3e3e3;"></div>
<div class="a" style="left:1608px;top:946px;width:2px;height:64px;background:#e3e3e3;"></div>
<div class="a" style="left:1796px;top:946px;width:2px;height:64px;background:#e3e3e3;"></div>
<div class="a" style="left:292px;top:1010px;width:1692px;height:2px;background:#a0a0a0;"></div>
<div class="a" style="left:292px;top:1012px;width:1692px;height:306px;background:#ffffff;"></div>
<div class="a" style="left:292px;top:1054px;width:1692px;height:2px;background:#a0a0a0;"></div>
<div class="a" style="left:292px;top:1098px;width:1692px;height:2px;background:#a0a0a0;"></div>
<div class="a" style="left:292px;top:1142px;width:1692px;height:2px;background:#a0a0a0;"></div>
<div class="a" style="left:292px;top:1186px;width:1692px;height:2px;background:#a0a0a0;"></div>
<div class="a" style="left:292px;top:1230px;width:1692px;height:2px;background:#a0a0a0;"></div>
<div class="a" style="left:292px;top:1274px;width:1692px;height:2px;background:#a0a0a0;"></div>
<div class="a" style="left:292px;top:1318px;width:1692px;height:2px;background:#a0a0a0;"></div>
<div class="a" style="left:478px;top:1012px;width:2px;height:306px;background:#a0a0a0;"></div>
<div class="a" style="left:666px;top:1012px;width:2px;height:306px;background:#a0a0a0;"></div>
<div class="a" style="left:854px;top:1012px;width:2px;height:306px;background:#a0a0a0;"></div>
<div class="a" style="left:1042px;top:1012px;width:2px;height:306px;background:#a0a0a0;"></div>
<div class="a" style="left:1232px;top:1012px;width:2px;height:306px;background:#a0a0a0;"></div>
<div class="a" style="left:1420px;top:1012px;width:2px;height:306px;background:#a0a0a0;"></div>
<div class="a" style="left:1608px;top:1012px;width:2px;height:306px;background:#a0a0a0;"></div>
<div class="a" style="left:1796px;top:1012px;width:2px;height:306px;background:#a0a0a0;"></div>
<div class="a" style="left:1984px;top:1012px;width:2px;height:306px;background:#a0a0a0;"></div>
<div class="a" style="left:292px;top:1012px;width:186px;height:42px;background:#0078d7;"></div>
<div class="t" style="left:307.3px;top:970px;font-size:21px;line-height:21px;color:#000;transform:scale(1.0000,1.1700);transform-origin:0 18px;">Subject ID</div>
<div class="t" style="left:493.0px;top:970px;font-size:21px;line-height:21px;color:#000;transform:scale(1.0000,1.1700);transform-origin:0 18px;">Region ID</div>
<div class="t" style="left:680.7px;top:970px;font-size:21px;line-height:21px;color:#000;transform:scale(1.0000,1.1700);transform-origin:0 18px;">Date</div>
<div class="t" style="left:868.9px;top:970px;font-size:21px;line-height:21px;color:#000;transform:scale(1.0000,1.1700);transform-origin:0 18px;">Dose index</div>
<div class="t" style="left:1056.8px;top:970px;font-size:21px;line-height:21px;color:#000;transform:scale(1.0000,1.1700);transform-origin:0 18px;">Dropout</div>
<div class="t" style="left:1246.6px;top:970px;font-size:21px;line-height:21px;color:#000;transform:scale(1.0000,1.1700);transform-origin:0 18px;">Duration</div>
<div class="t" style="left:1434.4px;top:970px;font-size:21px;line-height:21px;color:#000;transform:scale(1.0000,1.1700);transform-origin:0 18px;">Outcome</div>
<div class="t" style="left:1622.3px;top:956px;font-size:21px;line-height:21px;color:#000;transform:scale(1.0000,1.1700);transform-origin:0 18px;">Predictor</div>
<div class="t" style="left:1623.9px;top:982px;font-size:21px;line-height:21px;color:#000;transform:scale(1.0000,1.1700);transform-origin:0 18px;">value</div>
<div class="t" style="left:1810.3px;top:956px;font-size:21px;line-height:21px;color:#000;transform:scale(1.0000,1.1700);transform-origin:0 18px;">Pred</div>
<div class="t" style="left:1811.0px;top:982px;font-size:21px;line-height:21px;color:#000;transform:scale(1.0000,1.1700);transform-origin:0 18px;">Outcome</div>
<div class="t" style="left:298.4px;top:1024px;font-size:21px;line-height:21px;color:#ffffff;transform:scale(1.0000,1.1700);transform-origin:0 18px;">1</div>
<div class="t" style="left:484.9px;top:1024px;font-size:21px;line-height:21px;color:#000;transform:scale(1.0000,1.1700);transform-origin:0 18px;">1</div>
<div class="t" style="left:673.7px;top:1024px;font-size:21px;line-height:21px;color:#000;transform:scale(1.0000,1.1700);transform-origin:0 18px;">0.1</div>
<div class="t" style="left:860.9px;top:1024px;font-size:21px;line-height:21px;color:#000;transform:scale(1.0000,1.1700);transform-origin:0 18px;">1</div>
<div class="t" style="left:1049.7px;top:1024px;font-size:21px;line-height:21px;color:#000;transform:scale(1.0000,1.1700);transform-origin:0 18px;">0</div>
<div class="t" style="left:1239.4px;top:1024px;font-size:21px;line-height:21px;color:#000;transform:scale(1.0000,1.1700);transform-origin:0 18px;">25</div>
<div class="t" style="left:1427.7px;top:1024px;font-size:21px;line-height:21px;color:#000;transform:scale(1.0000,1.1700);transform-origin:0 18px;">0</div>
<div class="t" style="left:1615.6px;top:1024px;font-size:21px;line-height:21px;color:#000;transform:scale(1.0000,1.1700);transform-origin:0 18px;">-9999</div>
<div class="t" style="left:1803.6px;top:1024px;font-size:21px;line-height:21px;color:#000;transform:scale(1.0000,1.1700);transform-origin:0 18px;">-9999</div>
<div class="t" style="left:298.9px;top:1068px;font-size:21px;line-height:21px;color:#000;transform:scale(1.0000,1.1700);transform-origin:0 18px;">2</div>
<div class="t" style="left:484.9px;top:1068px;font-size:21px;line-height:21px;color:#000;transform:scale(1.0000,1.1700);transform-origin:0 18px;">1</div>
<div class="t" style="left:672.9px;top:1068px;font-size:21px;line-height:21px;color:#000;transform:scale(1.0000,1.1700);transform-origin:0 18px;">1.2</div>
<div class="t" style="left:861.4px;top:1068px;font-size:21px;line-height:21px;color:#000;transform:scale(1.0000,1.1700);transform-origin:0 18px;">2</div>
<div class="t" style="left:1049.7px;top:1068px;font-size:21px;line-height:21px;color:#000;transform:scale(1.0000,1.1700);transform-origin:0 18px;">0</div>
<div class="t" style="left:1238.9px;top:1068px;font-size:21px;line-height:21px;color:#000;transform:scale(1.0000,1.1700);transform-origin:0 18px;">17</div>
<div class="t" style="left:1426.9px;top:1068px;font-size:21px;line-height:21px;color:#000;transform:scale(1.0000,1.1700);transform-origin:0 18px;">1</div>
<div class="t" style="left:1615.6px;top:1068px;font-size:21px;line-height:21px;color:#000;transform:scale(1.0000,1.1700);transform-origin:0 18px;">-9999</div>
<div class="t" style="left:1803.6px;top:1068px;font-size:21px;line-height:21px;color:#000;transform:scale(1.0000,1.1700);transform-origin:0 18px;">-9999</div>
<div class="t" style="left:299.2px;top:1112px;font-size:21px;line-height:21px;color:#000;transform:scale(1.0000,1.1700);transform-origin:0 18px;">3</div>
<div class="t" style="left:484.9px;top:1112px;font-size:21px;line-height:21px;color:#000;transform:scale(1.0000,1.1700);transform-origin:0 18px;">1</div>
<div class="t" style="left:673.4px;top:1112px;font-size:21px;line-height:21px;color:#000;transform:scale(1.0000,1.1700);transform-origin:0 18px;">2.1</div>
<div class="t" style="left:860.9px;top:1112px;font-size:21px;line-height:21px;color:#000;transform:scale(1.0000,1.1700);transform-origin:0 18px;">1</div>
<div class="t" style="left:1049.7px;top:1112px;font-size:21px;line-height:21px;color:#000;transform:scale(1.0000,1.1700);transform-origin:0 18px;">0</div>
<div class="t" style="left:1238.9px;top:1112px;font-size:21px;line-height:21px;color:#000;transform:scale(1.0000,1.1700);transform-origin:0 18px;">12.5</div>
<div class="t" style="left:1426.9px;top:1112px;font-size:21px;line-height:21px;color:#000;transform:scale(1.0000,1.1700);transform-origin:0 18px;">1</div>
<div class="t" style="left:1615.6px;top:1112px;font-size:21px;line-height:21px;color:#000;transform:scale(1.0000,1.1700);transform-origin:0 18px;">-9999</div>
<div class="t" style="left:1803.6px;top:1112px;font-size:21px;line-height:21px;color:#000;transform:scale(1.0000,1.1700);transform-origin:0 18px;">-9999</div>
<div class="t" style="left:299.5px;top:1156px;font-size:21px;line-height:21px;color:#000;transform:scale(1.0000,1.1700);transform-origin:0 18px;">4</div>
<div class="t" style="left:484.9px;top:1156px;font-size:21px;line-height:21px;color:#000;transform:scale(1.0000,1.1700);transform-origin:0 18px;">1</div>
<div class="t" style="left:673.4px;top:1156px;font-size:21px;line-height:21px;color:#000;transform:scale(1.0000,1.1700);transform-origin:0 18px;">2.7</div>
<div class="t" style="left:861.4px;top:1156px;font-size:21px;line-height:21px;color:#000;transform:scale(1.0000,1.1700);transform-origin:0 18px;">2</div>
<div class="t" style="left:1049.7px;top:1156px;font-size:21px;line-height:21px;color:#000;transform:scale(1.0000,1.1700);transform-origin:0 18px;">0</div>
<div class="t" style="left:1239.6px;top:1156px;font-size:21px;line-height:21px;color:#000;transform:scale(1.0000,1.1700);transform-origin:0 18px;">8.1</div>
<div class="t" style="left:1426.9px;top:1156px;font-size:21px;line-height:21px;color:#000;transform:scale(1.0000,1.1700);transform-origin:0 18px;">1</div>
<div class="t" style="left:1615.6px;top:1156px;font-size:21px;line-height:21px;color:#000;transform:scale(1.0000,1.1700);transform-origin:0 18px;">-9999</div>
<div class="t" style="left:1803.6px;top:1156px;font-size:21px;line-height:21px;color:#000;transform:scale(1.0000,1.1700);transform-origin:0 18px;">-9999</div>
<div class="t" style="left:299.2px;top:1200px;font-size:21px;line-height:21px;color:#000;transform:scale(1.0000,1.1700);transform-origin:0 18px;">5</div>
<div class="t" style="left:484.9px;top:1200px;font-size:21px;line-height:21px;color:#000;transform:scale(1.0000,1.1700);transform-origin:0 18px;">1</div>
<div class="t" style="left:673.7px;top:1200px;font-size:21px;line-height:21px;color:#000;transform:scale(1.0000,1.1700);transform-origin:0 18px;">3</div>
<div class="t" style="left:860.9px;top:1200px;font-size:21px;line-height:21px;color:#000;transform:scale(1.0000,1.1700);transform-origin:0 18px;">1</div>
<div class="t" style="left:1049.7px;top:1200px;font-size:21px;line-height:21px;color:#000;transform:scale(1.0000,1.1700);transform-origin:0 18px;">0</div>
<div class="t" style="left:1239.4px;top:1200px;font-size:21px;line-height:21px;color:#000;transform:scale(1.0000,1.1700);transform-origin:0 18px;">25</div>
<div class="t" style="left:1427.7px;top:1200px;font-size:21px;line-height:21px;color:#000;transform:scale(1.0000,1.1700);transform-origin:0 18px;">0</div>
<div class="t" style="left:1615.6px;top:1200px;font-size:21px;line-height:21px;color:#000;transform:scale(1.0000,1.1700);transform-origin:0 18px;">-9999</div>
<div class="t" style="left:1803.6px;top:1200px;font-size:21px;line-height:21px;color:#000;transform:scale(1.0000,1.1700);transform-origin:0 18px;">-9999</div>
<div class="t" style="left:298.9px;top:1244px;font-size:21px;line-height:21px;color:#000;transform:scale(1.0000,1.1700);transform-origin:0 18px;">6</div>
<div class="t" style="left:484.9px;top:1244px;font-size:21px;line-height:21px;color:#000;transform:scale(1.0000,1.1700);transform-origin:0 18px;">1</div>
<div class="t" style="left:673.7px;top:1244px;font-size:21px;line-height:21px;color:#000;transform:scale(1.0000,1.1700);transform-origin:0 18px;">3.2</div>
<div class="t" style="left:861.4px;top:1244px;font-size:21px;line-height:21px;color:#000;transform:scale(1.0000,1.1700);transform-origin:0 18px;">2</div>
<div class="t" style="left:1049.7px;top:1244px;font-size:21px;line-height:21px;color:#000;transform:scale(1.0000,1.1700);transform-origin:0 18px;">0</div>
<div class="t" style="left:1239.4px;top:1244px;font-size:21px;line-height:21px;color:#000;transform:scale(1.0000,1.1700);transform-origin:0 18px;">25</div>
<div class="t" style="left:1427.7px;top:1244px;font-size:21px;line-height:21px;color:#000;transform:scale(1.0000,1.1700);transform-origin:0 18px;">0</div>
<div class="t" style="left:1615.6px;top:1244px;font-size:21px;line-height:21px;color:#000;transform:scale(1.0000,1.1700);transform-origin:0 18px;">-9999</div>
<div class="t" style="left:1803.6px;top:1244px;font-size:21px;line-height:21px;color:#000;transform:scale(1.0000,1.1700);transform-origin:0 18px;">-9999</div>
</body></html>
